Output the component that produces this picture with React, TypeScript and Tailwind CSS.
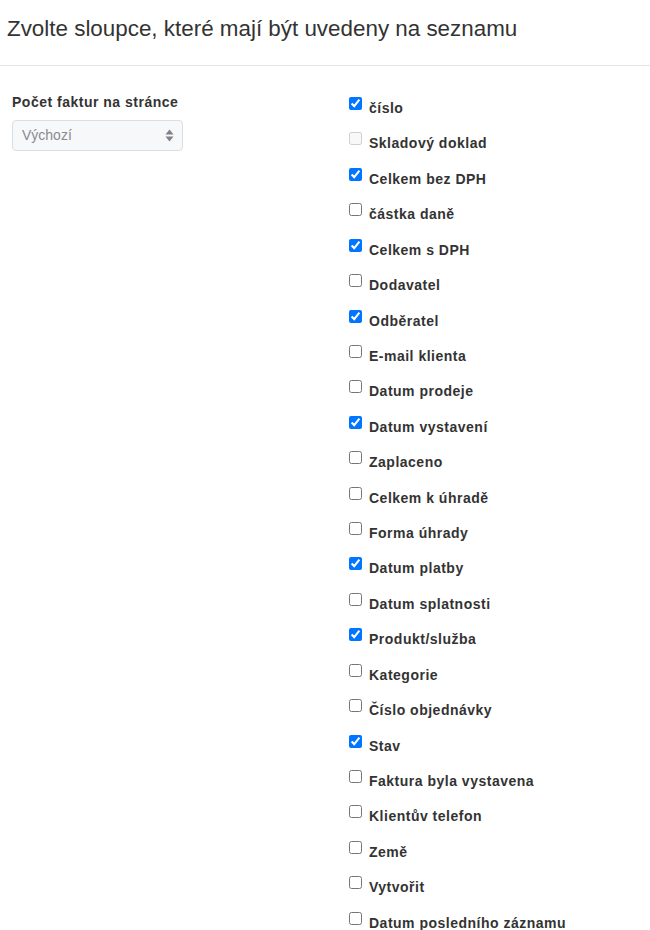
import React from "react";

const items: [string, boolean, boolean?][] = [
  ["číslo", true],
  ["Skladový doklad", false, true],
  ["Celkem bez DPH", true],
  ["částka daně", false],
  ["Celkem s DPH", true],
  ["Dodavatel", false],
  ["Odběratel", true],
  ["E-mail klienta", false],
  ["Datum prodeje", false],
  ["Datum vystavení", true],
  ["Zaplaceno", false],
  ["Celkem k úhradě", false],
  ["Forma úhrady", false],
  ["Datum platby", true],
  ["Datum splatnosti", false],
  ["Produkt/služba", true],
  ["Kategorie", false],
  ["Číslo objednávky", false],
  ["Stav", true],
  ["Faktura byla vystavena", false],
  ["Klientův telefon", false],
  ["Země", false],
  ["Vytvořit", false],
  ["Datum posledního záznamu", false],
];

export default function App() {
  return (
    <div className="w-[650px] h-[930px] overflow-hidden bg-white text-[#333]" style={{ fontFamily: "'Liberation Sans', Arial, sans-serif" }}>
      <div className="h-[66px] border-b border-[#e5e5e5] flex items-center pl-[7px]">
        <h1 className="text-[22.4px] font-normal text-[#333] leading-none -mt-[6px]">
          Zvolte sloupce, které mají být uvedeny na seznamu
        </h1>
      </div>
      <div className="flex">
        <div className="w-[337px] pl-[12px] pt-[25px]">
          <div className="text-[14px] font-bold tracking-[0.5px] text-[#333] leading-[22px]">Počet faktur na stránce</div>
          <div className="mt-[7px] w-[171px] h-[31px] rounded-[4px] border border-[#d9dfe6] bg-[#f6f8fa] flex items-center justify-between pl-[9px] pr-[8px]">
            <span className="text-[14px] text-[#868b92]">Výchozí</span>
            <svg width="9" height="15" viewBox="0 0 9 15">
              <path d="M4.5 1.5 L8.5 6.5 H0.5 Z" fill="#7d838a" />
              <path d="M4.5 13.5 L8.5 8.5 H0.5 Z" fill="#7d838a" />
            </svg>
          </div>
        </div>
        <div className="flex flex-col pl-[12px] pt-[31px]">
          {items.map(([label, checked, disabled], i) => (
            <label key={i} className="h-[35.43px] flex items-start">
              <input
                type="checkbox"
                defaultChecked={checked}
                disabled={disabled}
                className="w-[13px] h-[13px] m-0 mr-[7px]"
              />
              <span className="text-[14px] font-bold tracking-[0.5px] text-[#333] leading-[20px] mt-[1px]">{label}</span>
            </label>
          ))}
        </div>
      </div>
    </div>
  );
}
